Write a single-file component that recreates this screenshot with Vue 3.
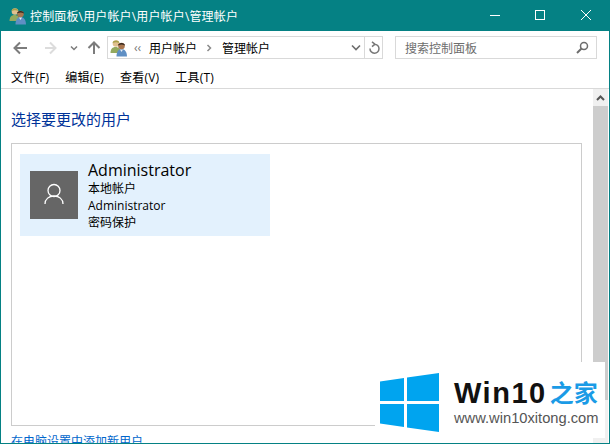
<template>
  <div class="window">
    <header class="titlebar">
      <svg class="users" viewBox="0 0 18 18"><use href="#users-icon" /></svg>
      <span class="title">控制面板\用户帐户\用户帐户\管理帐户</span>
      <div class="winbtns">
        <svg width="46" height="31" viewBox="0 0 46 31"><path d="M18 15.500h10" stroke="#fff" fill="none" /></svg>
        <svg width="46" height="31" viewBox="0 0 46 31"><rect x="17.500" y="10.500" width="9" height="9" stroke="#fff" fill="none" /></svg>
        <svg width="46" height="31" viewBox="0 0 46 31"><path d="M17 10l10 10M27 10L17 20" stroke="#fff" fill="none" /></svg>
      </div>
    </header>

    <div class="navbar">
      <div class="navbtns">
        <svg width="30" height="22" viewBox="0 0 30 22"><path d="M15 11H26M19 5.500L13.500 11l5.500 5.500" stroke="#7c7c7c" stroke-width="2" fill="none" /></svg>
        <svg width="30" height="22" viewBox="0 0 30 22"><path d="M14 11H25M19 5.500l5.500 5.500-5.500 5.500" stroke="#dcdcdc" stroke-width="2" fill="none" /></svg>
        <svg class="recent" width="16" height="22" viewBox="0 0 16 22"><path d="M5 9.500L8 12.500 11 9.500" stroke="#7c7c7c" stroke-width="1.500" fill="none" /></svg>
        <svg class="up" width="24" height="22" viewBox="0 0 24 22"><path d="M11 17V6M5.500 11L11 5.500l5.500 5.500" stroke="#7c7c7c" stroke-width="2" fill="none" /></svg>
      </div>
      <div class="address">
        <svg class="users" viewBox="0 0 18 18">
          <defs>
            <g id="users-icon">
              <path d="M0.500 14c0-4 2-6 5-6s5.500 2 5.500 6z" fill="#93a95e" />
              <circle cx="6" cy="4.500" r="3.300" fill="#e0c08f" />
              <path d="M2.600 4C3 1 9 .6 9.400 4 7 3 5 3 2.600 4z" fill="#a9a04a" />
              <path d="M6.500 17.500c0-5 2-7.500 5-7.500s5.500 2.500 5.500 7.500z" fill="#5f8fc4" />
              <path d="M10 10.500h3l-1.500 2.500z" fill="#e8eef5" />
              <circle cx="11.500" cy="7" r="3.300" fill="#a8754e" />
              <path d="M8 6.500C8 3 15 3 15 6.500 12.500 5 10.500 5 8 6.500z" fill="#33261e" />
            </g>
          </defs>
          <use href="#users-icon" />
        </svg>
        <span class="crumb-more">‹‹</span>
        <span class="crumb">用户帐户</span>
        <svg class="crumb-sep" width="6" height="8" viewBox="0 0 6 8"><path d="M1.500 1l3 3-3 3" stroke="#8a8a8a" stroke-width="1.500" fill="none" /></svg>
        <span class="crumb">管理帐户</span>
        <svg class="drop" width="10" height="7" viewBox="0 0 10 7"><path d="M1 1.500l4 4 4-4" stroke="#6d6d6d" stroke-width="1.600" fill="none" /></svg>
        <div class="refresh">
          <svg width="12" height="14" viewBox="0 0 12 14"><path d="M6.500 3.200A4.500 4.500 0 1 1 2 7.500M4 .8l3 2.400-3 2.400" stroke="#777" stroke-width="1.500" fill="none" /></svg>
        </div>
      </div>
      <div class="search">
        <span>搜索控制面板</span>
        <svg width="13" height="13" viewBox="0 0 13 13"><circle cx="8" cy="5" r="3.500" stroke="#6d6d6d" stroke-width="1.500" fill="none" /><path d="M5.500 7.500L1 12" stroke="#6d6d6d" stroke-width="2" /></svg>
      </div>
    </div>

    <nav class="menubar">
      <span v-for="item in menus" :key="item">{{ item }}</span>
    </nav>

    <div class="body">
      <main class="content">
        <h1>选择要更改的用户</h1>
        <section class="frame">
          <div class="card">
            <div class="avatar">
              <svg width="20" height="24" viewBox="0 0 20 24"><circle cx="10" cy="7.500" r="6" stroke="#fff" stroke-width="1.300" fill="none" /><path d="M1 21c0-5 4-8 9-8s9 3 9 8" stroke="#fff" stroke-width="1.300" fill="none" /></svg>
            </div>
            <div class="info">
              <div class="name">Administrator</div>
              <div>本地帐户</div>
              <div>Administrator</div>
              <div>密码保护</div>
            </div>
          </div>
        </section>
        <a class="add-link">在电脑设置中添加新用户</a>
      </main>
      <div class="scrollbar">
        <div class="sb-arrow">
          <svg width="9" height="6" viewBox="0 0 9 6"><path d="M1 5l3.500-3.500L8 5" stroke="#555" stroke-width="2" fill="none" /></svg>
        </div>
        <div class="sb-thumb"></div>
      </div>
    </div>

    <div class="watermark">
      <svg class="winlogo" width="60" height="59" viewBox="0 0 60 59">
        <path d="M0 8.500L24 5V28H0zM27 4.500L59 0V28H27zM0 31H24V54L0 50.500zM27 31H59V59L27 54.500z" fill="#00a4ef" />
      </svg>
      <div class="wm-text">
        <div class="wm-top"><b>Win10</b><span>之家</span></div>
        <div class="wm-url">www.win10xitong.com</div>
      </div>
    </div>
  </div>
</template>

<script setup>
const menus = ['文件(F)', '编辑(E)', '查看(V)', '工具(T)']
</script>

<style>
html, body {
  margin: 0;
  overflow: hidden;
}
</style>

<style scoped>
.window {
  position: relative;
  width: 610px;
  height: 444px;
  box-sizing: border-box;
  display: flex;
  flex-direction: column;
  overflow: hidden;
  background: #fff;
  border: 1px solid #058184;
  border-top: none;
  font-family: "Open Sans", "Noto Sans CJK SC", sans-serif;
  font-size: 12px;
  color: #000;
}
.titlebar {
  height: 31px;
  flex: none;
  display: flex;
  align-items: center;
  margin: 0 -1px;
  padding-left: 9px;
  background: #058184;
  color: #fff;
}
.users {
  width: 18px;
  height: 18px;
  flex: none;
}
.title {
  margin-left: 3px;
  letter-spacing: 0.15px;
  white-space: nowrap;
}
.winbtns {
  margin-left: auto;
  display: flex;
}
.winbtns svg {
  display: block;
}
.navbar {
  height: 33px;
  flex: none;
  display: flex;
  align-items: center;
}
.navbtns {
  display: flex;
  align-items: center;
  width: 106px;
  flex: none;
}
.navbtns svg {
  display: block;
}
.recent {
  margin-left: 5px;
}
.up {
  margin-left: 1px;
}
.address {
  width: 276px;
  height: 23px;
  box-sizing: border-box;
  flex: none;
  display: flex;
  align-items: center;
  border: 1px solid #d9d9d9;
  padding-left: 2px;
}
.crumb-more {
  margin-left: 6px;
  width: 15px;
  color: #777;
}
.crumb {
  white-space: nowrap;
}
.crumb-sep {
  margin: 0 10px 0 9px;
}
.drop {
  margin-left: auto;
  margin-right: 3px;
}
.refresh {
  width: 17px;
  height: 100%;
  border-left: 1px solid #d9d9d9;
  display: flex;
  align-items: center;
  justify-content: center;
}
.search {
  margin-left: 12px;
  width: 202px;
  height: 23px;
  box-sizing: border-box;
  display: flex;
  align-items: center;
  justify-content: space-between;
  border: 1px solid #d9d9d9;
  padding: 0 7px 0 9px;
  color: #6d6d6d;
}
.menubar {
  height: 25px;
  flex: none;
  box-sizing: border-box;
  display: flex;
  align-items: center;
  gap: 16px;
  padding: 1px 0 0 10px;
  letter-spacing: 0.2px;
  border-bottom: 1px solid #d9d9d9;
}
.body {
  flex: 1;
  min-height: 0;
  display: flex;
}
.content {
  flex: 1;
  min-width: 0;
  padding: 19px 11px 0 10px;
}
h1 {
  margin: 0;
  font-size: 15px;
  font-weight: 400;
  line-height: 22px;
  color: #003399;
}
.frame {
  margin-top: 13px;
  height: 283px;
  box-sizing: border-box;
  border: 1px solid #ccc;
  padding: 10px 8px;
}
.card {
  width: 250px;
  height: 82px;
  display: flex;
  align-items: center;
  gap: 10px;
  padding-left: 10px;
  box-sizing: border-box;
  background: #e3f1fd;
}
.avatar {
  width: 48px;
  height: 48px;
  flex: none;
  display: flex;
  align-items: center;
  justify-content: center;
  background: #666;
}
.info {
  line-height: 17px;
}
.name {
  font-size: 16px;
  line-height: 20px;
}
.add-link {
  display: block;
  margin-top: 7px;
  line-height: 17px;
  color: #0066cc;
  white-space: nowrap;
}
.scrollbar {
  width: 15px;
  flex: none;
  margin-right: 1px;
  background: #f0f0f0;
}
.sb-arrow {
  height: 17px;
  display: flex;
  align-items: center;
  justify-content: center;
}
.sb-thumb {
  height: 294px;
  background: #cdcdcd;
}
.watermark {
  position: absolute;
  left: 374px;
  top: 362px;
  width: 230px;
  height: 76px;
  display: flex;
  align-items: flex-start;
  gap: 14px;
  padding: 11px 0 0 5px;
  box-sizing: border-box;
  background: #fff;
}
.winlogo {
  flex: none;
}
.wm-text {
  margin-top: 5px;
}
.wm-top {
  display: flex;
  align-items: center;
  gap: 3px;
  line-height: 30px;
}
.wm-top b {
  font-family: "Liberation Sans", sans-serif;
  font-size: 29px;
  letter-spacing: 1.500px;
  color: #111;
}
.wm-top span {
  font-size: 24px;
  font-weight: 700;
  color: #1a9be6;
}
.wm-url {
  margin-top: 2px;
  font-family: "Liberation Sans", sans-serif;
  font-size: 14.700px;
  line-height: 17px;
  color: #555;
}
</style>
